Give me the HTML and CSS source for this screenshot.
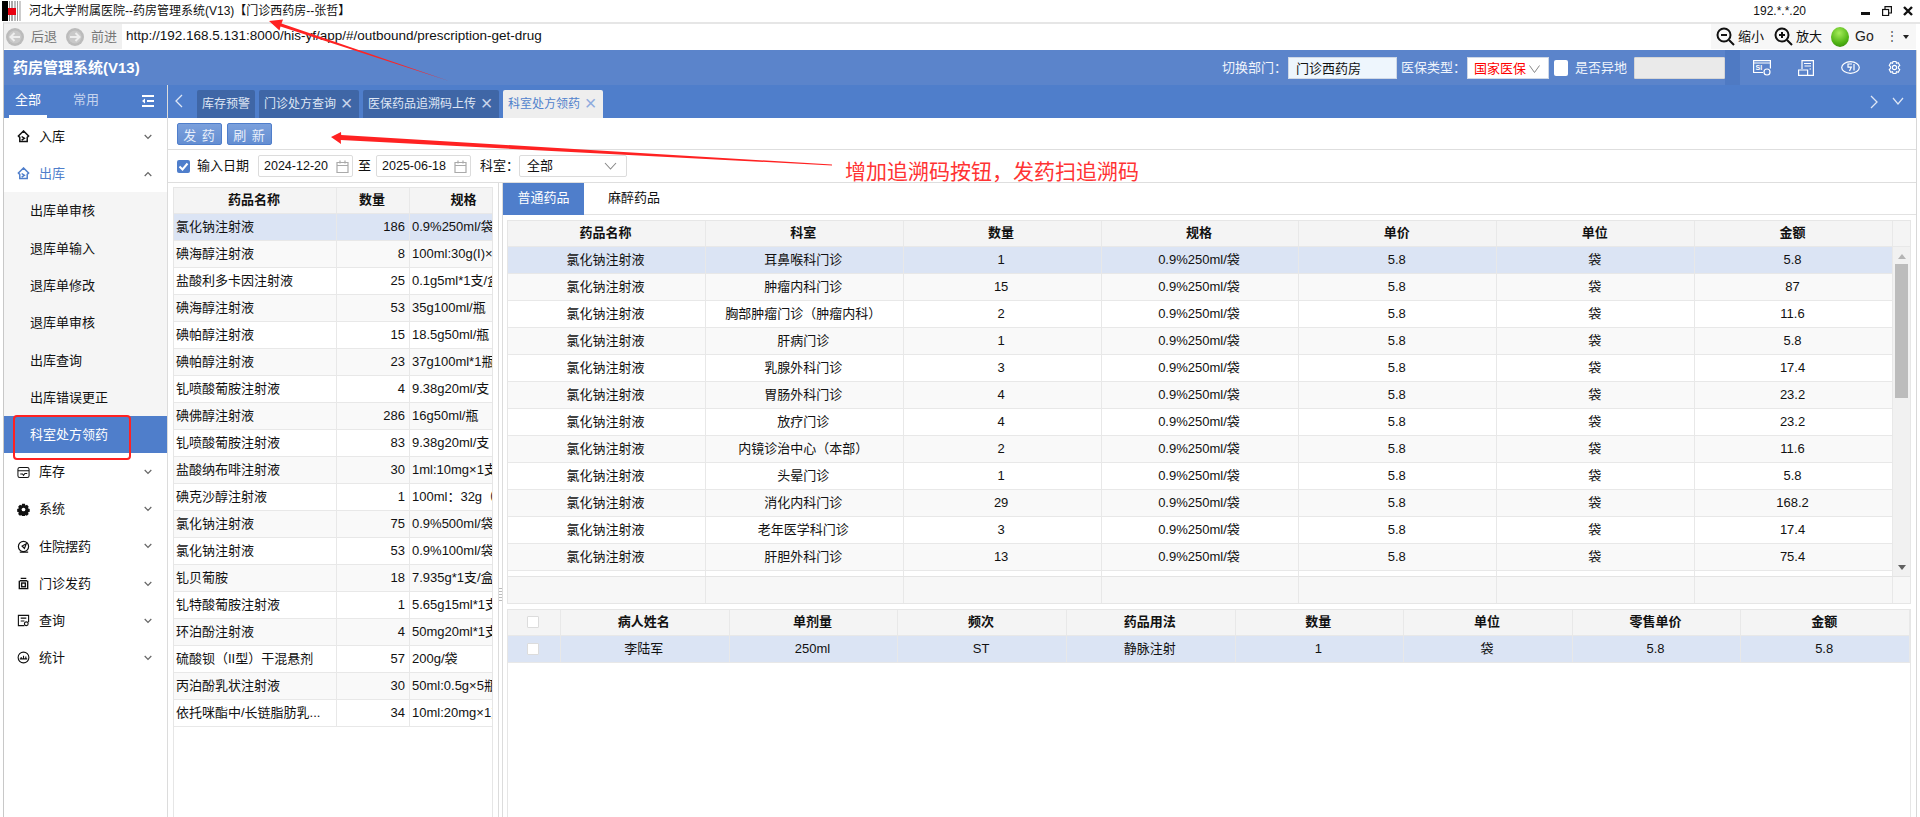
FILE: index.html
```html
<!DOCTYPE html>
<html lang="zh-CN">
<head>
<meta charset="utf-8">
<title>药房管理系统</title>
<link rel="stylesheet" href="styles.css">
</head>
<body>
<div class="window">
  <div class="titlebar">
    <svg class="logo" width="20" height="20" viewBox="0 0 20 20"><rect x="0" width="20" height="20" fill="#fff"/><rect x="0" width="6" height="20" fill="#000"/><rect x="7" width="1" height="20" fill="#888"/><rect x="9" width="2" height="20" fill="#aaa"/><rect x="12" width="2" height="20" fill="#bbb"/><rect x="15" width="1" height="20" fill="#999"/><rect x="17" width="2" height="20" fill="#ccc"/><rect x="6" y="7" width="8" height="7" fill="#e8000f"/></svg>
    <span class="title-text">河北大学附属医院--药房管理系统(V13)【门诊西药房--张哲】</span>
    <span class="ip">192.*.*.20</span>
    <span class="winctl">
      <svg width="10" height="10" viewBox="0 0 10 10"><rect y="6" width="9" height="3" fill="#111"/></svg>
      <svg width="10" height="10" viewBox="0 0 10 10" fill="none" stroke="#111" stroke-width="1.200"><rect x=".6" y="3.500" width="6" height="6"/><path d="M3 3.500V.6h6.400V7H6.600"/></svg>
      <svg width="10" height="10" viewBox="0 0 10 10" fill="none" stroke="#111" stroke-width="2.400"><path d="M1 1l8 8M9 1L1 9"/></svg>
    </span>
  </div>
  <div class="urlbar">
    <div class="nav">
      <svg width="20" height="20" viewBox="0 0 20 20"><circle cx="10" cy="10" r="9" fill="#bbb"/><circle cx="10" cy="10" r="6.5" fill="#c9c9c9"/><path d="M15 10H6M9.500 6L5.500 10l4 4" fill="none" stroke="#eee" stroke-width="2"/></svg>
      <span class="nav-label">后退</span>
      <svg class="nav-forward" width="20" height="20" viewBox="0 0 20 20"><circle cx="10" cy="10" r="9" fill="#bbb"/><circle cx="10" cy="10" r="6.500" fill="#c9c9c9"/><path d="M5 10h9M10.500 6l4 4-4 4" fill="none" stroke="#eee" stroke-width="2"/></svg>
      <span class="nav-label">前进</span>
    </div>
    <div class="url">http://192.168.5.131:8000/his-yf/app/#/outbound/prescription-get-drug</div>
    <div class="zoombar">
      <svg width="19" height="19" viewBox="0 0 19 19" fill="none" stroke="#111" stroke-width="2"><circle cx="8" cy="8" r="6.500"/><path d="M13 13l5 5M5 8h6"/></svg>
      <span class="zoom-label">缩小</span>
      <svg class="zoom-plus" width="19" height="19" viewBox="0 0 19 19" fill="none" stroke="#111" stroke-width="2"><circle cx="8" cy="8" r="6.500"/><path d="M13 13l5 5M5 8h6M8 5v6"/></svg>
      <span class="zoom-label">放大</span>
      <span class="ball"></span>
      <span class="go">Go</span>
      <span class="more">⋮</span>
      <span class="more-caret"></span>
    </div>
  </div>
  <div class="app">
    <header class="header">
      <div class="brand">药房管理系统(V13)</div>
      <div class="hdr-label hdr-dept">切换部门：</div>
      <div class="hdr-input hdr-input-dept">门诊西药房</div>
      <div class="hdr-label hdr-ins">医保类型：</div>
      <div class="hdr-select">国家医保<svg width="11" height="8" viewBox="0 0 11 8" fill="none" stroke="#888"><path d="M.5 .5l5 7 5-7"/></svg></div>
      <div class="hdr-check"></div>
      <div class="hdr-label hdr-other">是否异地</div>
      <div class="hdr-disabled"></div>
      <div class="hdr-block"></div>
      <div class="hdr-icon"><svg width="18" height="16" viewBox="0 0 18 16" fill="none" stroke="#fff" stroke-width="1.200"><path d="M10 12.500H.6V.6h16.800v8M.6 3h16.800"/><circle cx="14" cy="12" r="3"/><text class="icon-si" x="2.500" y="10">SI</text></svg></div>
      <div class="hdr-icon"><svg width="16" height="16" viewBox="0 0 16 16" fill="none" stroke="#fff" stroke-width="1.200"><path d="M4 9V.6h11.400v14.800H.6V10h9v5.400M6 3.500h7M6.500 6h6.500M11.500 9H13"/></svg></div>
      <div class="hdr-icon"><svg width="19" height="13" viewBox="0 0 19 13" fill="none" stroke="#fff" stroke-width="1.200"><ellipse cx="9.500" cy="6.500" rx="8.800" ry="5.800"/><path d="M11 3H7v3.200h3.300L8.500 10M13 3v6.500"/></svg></div>
      <div class="hdr-icon"><svg width="15" height="15" viewBox="0 0 18 20" fill="none" stroke="#fff" stroke-width="1.500"><path d="M7 2h4l.6 2.500 2.400-.8 2 3.500-1.800 1.800v2l1.800 1.800-2 3.500-2.400-.8L11 18H7l-.6-2.500-2.400.8-2-3.500 1.800-1.800v-2L2 7.200l2-3.500 2.400.8z"/><circle cx="9" cy="10" r="2.800"/></svg></div>
    </header>
    <div class="shell">
      <aside class="sidebar">
        <div class="side-tabs">
          <span class="side-tab is-active">全部</span>
          <span class="side-tab">常用</span>
          <svg class="side-fold" width="12" height="12" viewBox="0 0 12 12" fill="#fff"><rect width="12" height="2"/><rect x="5" y="5" width="7" height="2"/><rect y="10" width="12" height="2"/><path d="M3 3.500v5L0 6z"/></svg>
        </div>
        <nav class="menu">
          <div class="menu-item"><svg class="mi" viewBox="0 0 14 14" fill="none" stroke="currentColor" stroke-width="1.600"><path d="M7 1L1.500 6.500 3 8v4.500h8V8l1.500-1.500zM5 7l3 2-3 2"/></svg><span>入库</span><svg class="chev" viewBox="0 0 8 6" fill="none" stroke="#666" stroke-width="1.200"><path d="M.7 1l3.300 3.500L7.300 1"/></svg></div>
          <div class="menu-item is-open"><svg class="mi" viewBox="0 0 14 14" fill="none" stroke="currentColor" stroke-width="1.600"><path d="M7 1L1.500 6.500 3 8v4.500h8V8l1.500-1.500zM5 7l3 2-3 2"/></svg><span>出库</span><svg class="chev" viewBox="0 0 8 6" fill="none" stroke="#666" stroke-width="1.200"><path d="M.7 5l3.300-3.500L7.300 5"/></svg></div>
          <div class="sub">
            <div class="sub-item">出库单审核</div>
            <div class="sub-item">退库单输入</div>
            <div class="sub-item">退库单修改</div>
            <div class="sub-item">退库单审核</div>
            <div class="sub-item">出库查询</div>
            <div class="sub-item">出库错误更正</div>
            <div class="sub-item is-selected">科室处方领药</div>
          </div>
          <div class="menu-item"><svg class="mi" viewBox="0 0 14 14" fill="none" stroke="currentColor" stroke-width="1.100"><rect x="1" y="1.500" width="12" height="11" rx="2"/><path d="M1 5h12M3.500 8.500h2.500l1 1.500 1.500-2H11"/></svg><span>库存</span><svg class="chev" viewBox="0 0 8 6" fill="none" stroke="#666" stroke-width="1.200"><path d="M.7 1l3.300 3.500L7.300 1"/></svg></div>
          <div class="menu-item"><svg class="mi" viewBox="0 0 14 14" fill="currentColor"><path d="M5.500 .8h3l.5 2 1.800-.8 1.800 2-.9 1.600 2 .9v3l-2 .6.900 1.700-2 1.900-1.700-.9-.5 1.900h-3l-.5-1.900-1.800.9-1.900-1.900.9-1.700-1.900-.6V6.500l1.900-.9-.9-1.600L3.200 2l1.800.8z"/><circle cx="7" cy="7" r="2" fill="#fff"/></svg><span>系统</span><svg class="chev" viewBox="0 0 8 6" fill="none" stroke="#666" stroke-width="1.200"><path d="M.7 1l3.300 3.500L7.300 1"/></svg></div>
          <div class="menu-item"><svg class="mi" viewBox="0 0 14 14" fill="none" stroke="currentColor" stroke-width="1.300"><circle cx="7" cy="7" r="5.500"/><path d="M10 4L5.500 6.500 8 9zM3 13h9"/></svg><span>住院摆药</span><svg class="chev" viewBox="0 0 8 6" fill="none" stroke="#666" stroke-width="1.200"><path d="M.7 1l3.300 3.500L7.300 1"/></svg></div>
          <div class="menu-item"><svg class="mi" viewBox="0 0 14 14" fill="none" stroke="currentColor" stroke-width="1.500"><path d="M4 1.500h6M3 4h8M2.500 4v8.500h9V4"/><rect x="5" y="6.500" width="4" height="4"/></svg><span>门诊发药</span><svg class="chev" viewBox="0 0 8 6" fill="none" stroke="#666" stroke-width="1.200"><path d="M.7 1l3.300 3.500L7.300 1"/></svg></div>
          <div class="menu-item"><svg class="mi" viewBox="0 0 14 14" fill="none" stroke="currentColor" stroke-width="1.200"><path d="M8 12.500H1.500v-11h11V9M4 4.500h6M4 7.500h4"/><circle cx="10" cy="10.500" r="2"/></svg><span>查询</span><svg class="chev" viewBox="0 0 8 6" fill="none" stroke="#666" stroke-width="1.200"><path d="M.7 1l3.300 3.500L7.300 1"/></svg></div>
          <div class="menu-item"><svg class="mi" viewBox="0 0 14 14" fill="none" stroke="currentColor" stroke-width="1.200"><circle cx="7" cy="7" r="5.800"/><path d="M3 8.500h8M4.500 8.500V6.500M7 8.500V5M9.500 8.500V6"/></svg><span>统计</span><svg class="chev" viewBox="0 0 8 6" fill="none" stroke="#666" stroke-width="1.200"><path d="M.7 1l3.300 3.500L7.300 1"/></svg></div>
        </nav>
      </aside>
      <main class="main">
        <div class="tabstrip">
          <svg class="tab-prev" width="10" height="14" viewBox="0 0 10 14" fill="none" stroke="#dfe7f5" stroke-width="1.300"><path d="M8 1L2 7l6 6"/></svg>
          <div class="tab">库存预警</div>
          <div class="tab">门诊处方查询<span class="tab-x">×</span></div>
          <div class="tab">医保药品追溯码上传<span class="tab-x">×</span></div>
          <div class="tab is-active">科室处方领药<span class="tab-x">×</span></div>
          <svg class="tab-next" width="10" height="14" viewBox="0 0 10 14" fill="none" stroke="#dfe7f5" stroke-width="1.300"><path d="M2 1l6 6-6 6"/></svg>
          <svg class="tab-down" width="12" height="8" viewBox="0 0 12 8" fill="none" stroke="#dfe7f5" stroke-width="1.200"><path d="M1 1l5 6 5-6"/></svg>
        </div>
        <div class="toolbar">
          <button class="btn">发 药</button>
          <button class="btn">刷 新</button>
        </div>
        <div class="filter">
          <span class="check-on"><svg width="13" height="13" viewBox="0 0 13 13" fill="none" stroke="#fff" stroke-width="2"><path d="M2.500 6.500l3 3 5-6"/></svg></span>
          <span class="f-label">输入日期</span>
          <span class="date">2024-12-20<svg width="13" height="13" viewBox="0 0 13 13" fill="none" stroke="#aaa" stroke-width="1.200"><path d="M1 2.500h11v10H1zM1 5.500h11M4 .5v3M9 .5v3"/></svg></span>
          <span class="f-to">至</span>
          <span class="date">2025-06-18<svg width="13" height="13" viewBox="0 0 13 13" fill="none" stroke="#aaa" stroke-width="1.200"><path d="M1 2.500h11v10H1zM1 5.500h11M4 .5v3M9 .5v3"/></svg></span>
          <span class="f-dept">科室：</span>
          <span class="f-select">全部<svg width="13" height="8" viewBox="0 0 13 8" fill="none" stroke="#888" stroke-width="1.100"><path d="M1 1l5.500 6L12 1"/></svg></span>
        </div>
        <div class="panes">
          <section class="pane-left">
            <div class="left-grid">
              <table class="tbl tbl-left">
                <colgroup><col class="lc1"><col class="lc2"><col class="lc3"></colgroup>
                <thead><tr><th>药品名称</th><th>数量</th><th>规格</th></tr></thead>
                <tbody>
                  <tr class="sel"><td class="l">氯化钠注射液</td><td class="r">186</td><td class="l">0.9%250ml/袋</td></tr>
                  <tr><td class="l">碘海醇注射液</td><td class="r">8</td><td class="l">100ml:30g(I)×1瓶</td></tr>
                  <tr><td class="l">盐酸利多卡因注射液</td><td class="r">25</td><td class="l">0.1g5ml*1支/盒</td></tr>
                  <tr><td class="l">碘海醇注射液</td><td class="r">53</td><td class="l">35g100ml/瓶</td></tr>
                  <tr><td class="l">碘帕醇注射液</td><td class="r">15</td><td class="l">18.5g50ml/瓶</td></tr>
                  <tr><td class="l">碘帕醇注射液</td><td class="r">23</td><td class="l">37g100ml*1瓶</td></tr>
                  <tr><td class="l">钆喷酸葡胺注射液</td><td class="r">4</td><td class="l">9.38g20ml/支</td></tr>
                  <tr><td class="l">碘佛醇注射液</td><td class="r">286</td><td class="l">16g50ml/瓶</td></tr>
                  <tr><td class="l">钆喷酸葡胺注射液</td><td class="r">83</td><td class="l">9.38g20ml/支</td></tr>
                  <tr><td class="l">盐酸纳布啡注射液</td><td class="r">30</td><td class="l">1ml:10mg×1支</td></tr>
                  <tr><td class="l">碘克沙醇注射液</td><td class="r">1</td><td class="l">100ml：32g（I）</td></tr>
                  <tr><td class="l">氯化钠注射液</td><td class="r">75</td><td class="l">0.9%500ml/袋</td></tr>
                  <tr><td class="l">氯化钠注射液</td><td class="r">53</td><td class="l">0.9%100ml/袋</td></tr>
                  <tr><td class="l">钆贝葡胺</td><td class="r">18</td><td class="l">7.935g*1支/盒</td></tr>
                  <tr><td class="l">钆特酸葡胺注射液</td><td class="r">1</td><td class="l">5.65g15ml*1支</td></tr>
                  <tr><td class="l">环泊酚注射液</td><td class="r">4</td><td class="l">50mg20ml*1支</td></tr>
                  <tr><td class="l">硫酸钡（II型）干混悬剂</td><td class="r">57</td><td class="l">200g/袋</td></tr>
                  <tr><td class="l">丙泊酚乳状注射液</td><td class="r">30</td><td class="l">50ml:0.5g×5瓶</td></tr>
                  <tr><td class="l">依托咪酯中/长链脂肪乳...</td><td class="r">34</td><td class="l">10ml:20mg×1支</td></tr>
                </tbody>
              </table>
            </div>
          </section>
          <div class="split"><span class="split-dots"></span></div>
          <section class="pane-right">
            <div class="rtabs">
              <div class="rtab is-active">普通药品</div>
              <div class="rtab rtab-next">麻醉药品</div>
            </div>
            <div class="grid-top">
              <div class="g-head">
                <table class="tbl"><thead><tr><th>药品名称</th><th>科室</th><th>数量</th><th>规格</th><th>单价</th><th>单位</th><th>金额</th></tr></thead></table>
                <div class="g-spacer"></div>
              </div>
              <div class="g-body">
                <div class="g-view">
                  <table class="tbl">
                    <tbody>
                      <tr class="sel"><td>氯化钠注射液</td><td>耳鼻喉科门诊</td><td>1</td><td>0.9%250ml/袋</td><td>5.8</td><td>袋</td><td>5.8</td></tr>
                      <tr><td>氯化钠注射液</td><td>肿瘤内科门诊</td><td>15</td><td>0.9%250ml/袋</td><td>5.8</td><td>袋</td><td>87</td></tr>
                      <tr><td>氯化钠注射液</td><td>胸部肿瘤门诊（肿瘤内科）</td><td>2</td><td>0.9%250ml/袋</td><td>5.8</td><td>袋</td><td>11.6</td></tr>
                      <tr><td>氯化钠注射液</td><td>肝病门诊</td><td>1</td><td>0.9%250ml/袋</td><td>5.8</td><td>袋</td><td>5.8</td></tr>
                      <tr><td>氯化钠注射液</td><td>乳腺外科门诊</td><td>3</td><td>0.9%250ml/袋</td><td>5.8</td><td>袋</td><td>17.4</td></tr>
                      <tr><td>氯化钠注射液</td><td>胃肠外科门诊</td><td>4</td><td>0.9%250ml/袋</td><td>5.8</td><td>袋</td><td>23.2</td></tr>
                      <tr><td>氯化钠注射液</td><td>放疗门诊</td><td>4</td><td>0.9%250ml/袋</td><td>5.8</td><td>袋</td><td>23.2</td></tr>
                      <tr><td>氯化钠注射液</td><td>内镜诊治中心（本部）</td><td>2</td><td>0.9%250ml/袋</td><td>5.8</td><td>袋</td><td>11.6</td></tr>
                      <tr><td>氯化钠注射液</td><td>头晕门诊</td><td>1</td><td>0.9%250ml/袋</td><td>5.8</td><td>袋</td><td>5.8</td></tr>
                      <tr><td>氯化钠注射液</td><td>消化内科门诊</td><td>29</td><td>0.9%250ml/袋</td><td>5.8</td><td>袋</td><td>168.2</td></tr>
                      <tr><td>氯化钠注射液</td><td>老年医学科门诊</td><td>3</td><td>0.9%250ml/袋</td><td>5.8</td><td>袋</td><td>17.4</td></tr>
                      <tr><td>氯化钠注射液</td><td>肝胆外科门诊</td><td>13</td><td>0.9%250ml/袋</td><td>5.8</td><td>袋</td><td>75.4</td></tr>
                      <tr><td></td><td></td><td></td><td></td><td></td><td></td><td></td></tr>
                    </tbody>
                  </table>
                </div>
                <div class="scrollbar">
                  <span class="sb-up"></span>
                  <span class="sb-thumb"></span>
                  <span class="sb-down"></span>
                </div>
              </div>
              <div class="g-foot">
                <table class="tbl tbl-foot"><tbody><tr><td></td><td></td><td></td><td></td><td></td><td></td><td></td></tr></tbody></table>
                <div class="g-spacer"></div>
              </div>
            </div>
            <div class="grid-bottom">
              <table class="tbl tbl-detail">
                <colgroup><col class="dc0"><col><col><col><col><col><col><col><col></colgroup>
                <thead><tr><th><span class="cb"></span></th><th>病人姓名</th><th>单剂量</th><th>频次</th><th>药品用法</th><th>数量</th><th>单位</th><th>零售单价</th><th>金额</th></tr></thead>
                <tbody><tr class="sel"><td><span class="cb"></span></td><td>李陆军</td><td>250ml</td><td>ST</td><td>静脉注射</td><td>1</td><td>袋</td><td>5.8</td><td>5.8</td></tr></tbody>
              </table>
            </div>
          </section>
        </div>
      </main>
    </div>
  </div>
</div>
<svg class="annot" width="1920" height="817" viewBox="0 0 1920 817">
  <polygon fill="#f22" points="269,21 283,19.500 281.500,23.500 449,81 280.500,26.500 279.500,30.500"/>
  <polygon fill="#f22" points="331,137 341,132 341.200,135 832,164.500 832,165.500 340.800,140 341,144"/>
  <rect x="14" y="416" width="116" height="43" rx="3" fill="none" stroke="#f22" stroke-width="2"/>
</svg>
<div class="annot-text">增加追溯码按钮，发药扫追溯码</div>
</body>
</html>
```
FILE: styles.css
```css
* { box-sizing: border-box; }
html, body { margin: 0; height: 100%; }
body {
  width: 1920px;
  height: 817px;
  overflow: hidden;
  position: relative;
  background: #fff;
  color: #111;
  font: 13px/1.2 "Liberation Sans", "Noto Sans CJK SC", sans-serif;
}
.window { height: 817px; display: flex; flex-direction: column; }

/* window title */
.titlebar { height: 22px; display: flex; align-items: center; padding: 0 7px 0 2px; flex: none; font-size: 12px; }
.logo { flex: none; }
.title-text { margin-left: 7px; }
.ip { margin-left: auto; margin-right: 55px; }
.winctl { display: flex; gap: 11px; align-items: center; }

/* address bar */
.urlbar { height: 28px; flex: none; display: flex; margin-left: 3px; border-top: 2px solid #e6e6e6; border-left: 1px solid #d0d0d0; padding-bottom: 1px; }
.nav { width: 118px; background: #f0f0f0; display: flex; align-items: center; padding-left: 1px; flex: none; }
.nav-label { margin-left: 6px; color: #777; }
.nav-forward { margin-left: 8px; }
.url { flex: 1; padding: 4px 0 0 4px; font-size: 13.5px; }
.zoombar { width: 205px; margin-right: 4px; background: #f7f7f7; display: flex; align-items: center; padding-left: 5px; flex: none; }
.zoom-label { margin-left: 3px; }
.zoom-plus { margin-left: 10px; }
.ball { width: 18px; height: 20px; border-radius: 50%; margin-left: 9px; background: radial-gradient(circle at 45% 30%, #a6ec5a, #4fb313 60%, #2c7d0c); }
.go { margin-left: 6px; font-size: 14px; color: #222; }
.more { margin-left: 12px; color: #555; font-size: 12px; }
.more-caret { margin-left: 5px; border: 3px solid transparent; border-top: 4px solid #222; border-bottom: 0; }

/* application */
.app { flex: 1; min-height: 0; display: flex; flex-direction: column; margin: 0 3px; border-left: 1px solid #c8c8c8; border-right: 1px solid #d8d8d8; }
.header { height: 35px; flex: none; background: #5b84cb; color: #fff; display: flex; align-items: center; }
.brand { font-size: 15px; font-weight: 700; margin-left: 9px; }
.hdr-label { color: #f0f4fb; white-space: nowrap; }
.hdr-dept { margin-left: auto; }
.hdr-input { margin-left: 1px; width: 109px; height: 22px; background: #eef6fd; color: #111; border: 1px solid #cfd8e6; padding: 3px 0 0 7px; }
.hdr-ins { margin-left: 4px; }
.hdr-select { margin-left: 1px; width: 82px; height: 22px; background: #fff; color: #f00; border: 1px solid #cfd8e6; padding: 3px 0 0 6px; white-space: nowrap; display: flex; gap: 3px; }
.hdr-select svg { margin-top: 4px; }
.hdr-check { margin-left: 5px; width: 14px; height: 16px; background: #fff; border-radius: 2px; }
.hdr-other { margin-left: 7px; }
.hdr-disabled { margin-left: 7px; width: 91px; height: 22px; background: #eaeaea; border: 1px solid #d6d6d6; border-radius: 1px; }
.hdr-block { width: 15px; height: 35px; background: #4f7ac3; }
.hdr-icon { width: 44px; height: 35px; display: flex; align-items: center; justify-content: center; flex: none; }
.icon-si { font: 700 7px "Liberation Sans", sans-serif; fill: #fff; stroke: none; }

.shell { flex: 1; min-height: 0; display: flex; }

/* sidebar */
.sidebar { width: 164px; flex: none; border-right: 1px solid #dcdcdc; background: #fff; display: flex; flex-direction: column; }
.side-tabs { height: 33px; background: #4f7ecb; display: flex; position: relative; padding-left: 5px; color: #c6d4ee; flex: none; }
.side-tab { width: 38px; height: 33px; line-height: 30px; text-align: center; margin-right: 20px; border-bottom: 3px solid transparent; }
.side-tab.is-active { color: #fff; border-bottom-color: #fff; }
.side-fold { position: absolute; left: 138px; top: 10px; }
.menu { flex: 1; }
.menu-item { height: 37.2px; display: flex; align-items: center; padding-left: 13px; }
.menu-item span { margin-left: 9px; }
.menu-item.is-open { color: #4f7ecb; }
.mi { width: 13px; height: 13px; flex: none; }
.chev { width: 8px; height: 6px; margin-left: auto; margin-right: 15px; }
.sub { background: #f5f5f5; }
.sub-item { height: 37.3px; line-height: 37px; padding-left: 26px; }
.sub-item.is-selected { background: #4f7ecb; color: #fff; }

/* main */
.main { flex: 1; min-width: 0; display: flex; flex-direction: column; }
.tabstrip { height: 33px; flex: none; background: #4f7ecb; display: flex; align-items: flex-end; position: relative; padding-left: 29px; gap: 4px; }
.tab-prev { position: absolute; left: 6px; top: 9px; }
.tab-next { position: absolute; right: 37px; top: 10px; }
.tab-down { position: absolute; right: 12px; top: 12px; }
.tab { height: 28px; padding: 0 5px; line-height: 28px; font-size: 12px; background: #3f66a6; color: #dfe7f5; border-radius: 2px 2px 0 0; white-space: nowrap; }
.tab.is-active { background: #eee; color: #5182cc; }
.tab-x { display: inline-block; width: 15px; margin-left: 3px; font-size: 20px; line-height: 20px; text-align: center; color: #c8d5ec; vertical-align: -2px; font-weight: 400; }
.tab.is-active .tab-x { color: #8eabde; }

.toolbar { height: 32px; flex: none; border-bottom: 1px solid #dedede; display: flex; gap: 5px; padding: 5px 0 0 9px; align-items: flex-start; }
.btn { width: 45px; height: 22px; padding: 0; background: linear-gradient(#7ba0dc, #648ed2); border: 1px solid #4f7ecb; border-radius: 2px; color: #e6eefa; font: 13px "Liberation Sans", "Noto Sans CJK SC", sans-serif; letter-spacing: 1px; }

.filter { height: 33px; flex: none; border-bottom: 1px solid #dedede; display: flex; align-items: center; padding-left: 9px; }
.check-on { width: 13px; height: 13px; background: #4f7ecb; border-radius: 2px; display: block; }
.check-on svg { display: block; }
.f-label { margin-left: 7px; }
.date { margin-left: 9px; width: 95px; height: 22px; border: 1px solid #dcdcdc; border-radius: 2px; display: flex; align-items: center; justify-content: space-between; padding: 0 3px 0 5px; font-size: 12.5px; }
.f-to { margin-left: 5px; }
.f-to + .date { margin-left: 5px; }
.f-dept { margin-left: 9px; }
.f-select { margin-left: 0; width: 108px; height: 22px; border: 1px solid #dcdcdc; border-radius: 2px; display: flex; align-items: center; justify-content: space-between; padding: 0 9px 0 7px; }

.panes { flex: 1; min-height: 0; display: flex; }
.pane-left { width: 331px; flex: none; border-right: 1px solid #dcdcdc; padding: 4px 5px 0; }
.left-grid { width: 320px; height: 100%; border: 1px solid #e6e6e6; border-bottom: 0; overflow: hidden; }
.split { width: 3px; flex: none; padding-top: 405px; }
.split-dots { display: block; width: 3px; height: 14px; background: repeating-linear-gradient(#bbb 0 1px, #fff 1px 3px); }
.pane-right { flex: 1; min-width: 0; border-left: 1px solid #dcdcdc; display: flex; flex-direction: column; }
.rtabs { height: 32px; flex: none; display: flex; border-bottom: 1px solid #e2e2e2; }
.rtab { width: 81px; text-align: center; line-height: 30px; }
.rtab-next { width: 100px; }
.rtab.is-active { background: #4f7ecb; color: #fff; height: 32px; }

/* tables */
.tbl { width: 100%; table-layout: fixed; border-collapse: separate; border-spacing: 0; }
.tbl th, .tbl td { height: 27px; padding: 0 2px 1px 0; text-align: center; white-space: nowrap; overflow: hidden; border-right: 1px solid #e8e8e8; border-bottom: 1px solid #e8e8e8; font-weight: 400; }
.tbl th { height: 26px; padding-bottom: 2px; background: #f4f4f4; font-weight: 700; }
.tbl tbody tr:nth-child(even) td { background: #f9f9f9; }
.tbl tbody tr.sel td { background: #dbe4f4; }
.tbl-left { width: 346px; }
.lc1 { width: 163px; }
.lc2 { width: 73px; }
.tbl .l { text-align: left; padding-left: 2px; padding-right: 0; }
.tbl .r { text-align: right; padding-right: 4px; }

.grid-top { margin: 5px 5px 0 4px; height: 384px; flex: none; border: 1px solid #e6e6e6; display: flex; flex-direction: column; }
.g-head, .g-foot { display: flex; flex: none; }
.g-head .tbl, .g-foot .tbl { flex: 1; min-width: 0; }
.g-spacer { width: 17px; background: #f4f4f4; flex: none; border-bottom: 1px solid #e8e8e8; }
.g-body { height: 329px; flex: none; display: flex; }
.g-view { flex: 1; min-width: 0; overflow: hidden; }
.scrollbar { width: 17px; flex: none; background: #f1f1f1; display: flex; flex-direction: column; align-items: center; position: relative; }
.sb-up { margin-top: 7px; border: 4px solid transparent; border-top: 0; border-bottom: 5px solid #b4b4b4; }
.sb-thumb { width: 13px; height: 134px; margin-top: 5px; background: #bcbcbc; }
.sb-down { margin-top: auto; margin-bottom: 6px; border: 4px solid transparent; border-bottom: 0; border-top: 5px solid #606060; }
.g-foot { border-top: 1px solid #e4e4e4; }
.g-foot .g-spacer { background: #f7f7f7; border-bottom: 0; }
.tbl-foot td, .tbl.tbl-foot tbody tr:nth-child(even) td { height: 26px; background: #f7f7f7; border-bottom: 0; }
.tbl.tbl-foot tbody tr td { background: #f7f7f7; }
.grid-bottom { margin: 5px 5px 0 4px; flex: 1; min-height: 0; border: 1px solid #e6e6e6; border-bottom: 0; }
.dc0 { width: 53px; }
.cb { display: inline-block; width: 12px; height: 12px; vertical-align: middle; background: #fff; border: 1px solid #dcdcdc; border-radius: 1px; }

/* reviewer's annotations lying over the screenshot */
.annot { position: absolute; left: 0; top: 0; pointer-events: none; }
.annot-text { position: absolute; left: 845px; top: 158px; font-size: 21px; line-height: 28px; color: #f33; white-space: nowrap; }
```
